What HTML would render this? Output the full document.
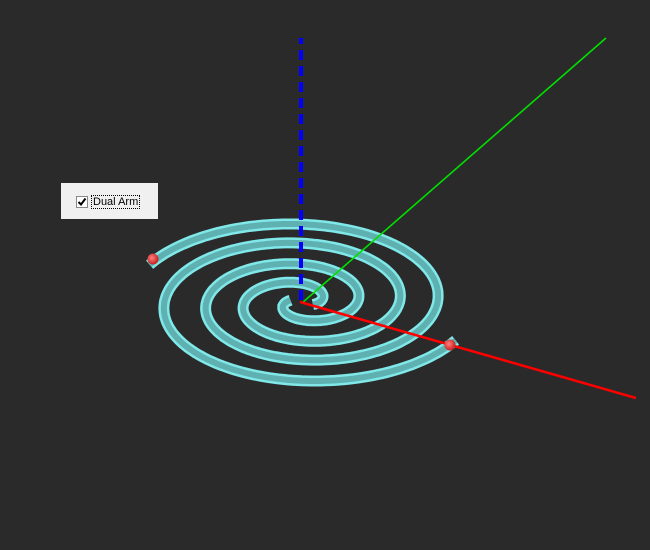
<!DOCTYPE html>
<html><head><style>
html,body{margin:0;padding:0;background:#2a2a2a;width:650px;height:550px;overflow:hidden}
#p{position:absolute;left:61px;top:183px;width:97px;height:36px;background:#f0f0f0}
#cb{position:absolute;left:15px;top:13px;width:10px;height:10px;border:1px solid #888;background:#fff}
#lb{position:absolute;left:30px;top:12px;font:11px "Liberation Sans",sans-serif;color:#000;border:1px dotted #000;padding:0 1px;line-height:12px}
</style></head><body>
<svg id="s" width="650" height="550" style="position:absolute;left:0;top:0">
<defs><radialGradient id="rg" cx="0.4" cy="0.4" r="0.6"><stop offset="0" stop-color="#ff8080"/><stop offset="1" stop-color="#c82020"/></radialGradient></defs>
<g id="sp"></g>
<line x1="301" y1="300" x2="301" y2="38" stroke="#0000ff" stroke-width="4" stroke-dasharray="10,6"/>
<line x1="302" y1="303" x2="606" y2="38" stroke="#00e000" stroke-width="1.6"/>
<line x1="300" y1="302" x2="636" y2="398" stroke="#ff0000" stroke-width="2.5"/>
<circle cx="153" cy="259" r="5.5" fill="url(#rg)"/>
<circle cx="450" cy="345" r="5.5" fill="url(#rg)"/>
</svg>
<div id="p"><div id="cb"><svg width="10" height="10" style="position:absolute;left:0;top:0"><path d="M1.5 5 L4 7.5 L8.5 1.5" stroke="#000" stroke-width="2" fill="none"/></svg></div><div id="lb">Dual Arm</div></div>
<script>
var cx=302,cy=302,ys=0.5,b=80/(2*Math.PI);
function arm(endAng,total){
 var pts=[];var t0=12/b;total=total/b;
 for(var t=t0;t<=total;t+=0.03){var r=b*t;var a=endAng+(total-t);pts.push((cx+r*Math.cos(a)).toFixed(1)+","+(cy+r*Math.sin(a)*ys).toFixed(1));}
 return "M"+pts.join(" L");
}
var A=arm(205*Math.PI/180,170),B=arm(25*Math.PI/180,172);
var g=document.getElementById('sp');
g.innerHTML='<path d="'+A+'" stroke="#80e8e8" stroke-width="11" fill="none"/><path d="'+B+'" stroke="#80e8e8" stroke-width="11" fill="none"/>'+
'<path d="'+A+'" stroke="#5fb0b0" stroke-width="6" fill="none"/><path d="'+B+'" stroke="#5fb0b0" stroke-width="6" fill="none"/>';
</script>
</body></html>
